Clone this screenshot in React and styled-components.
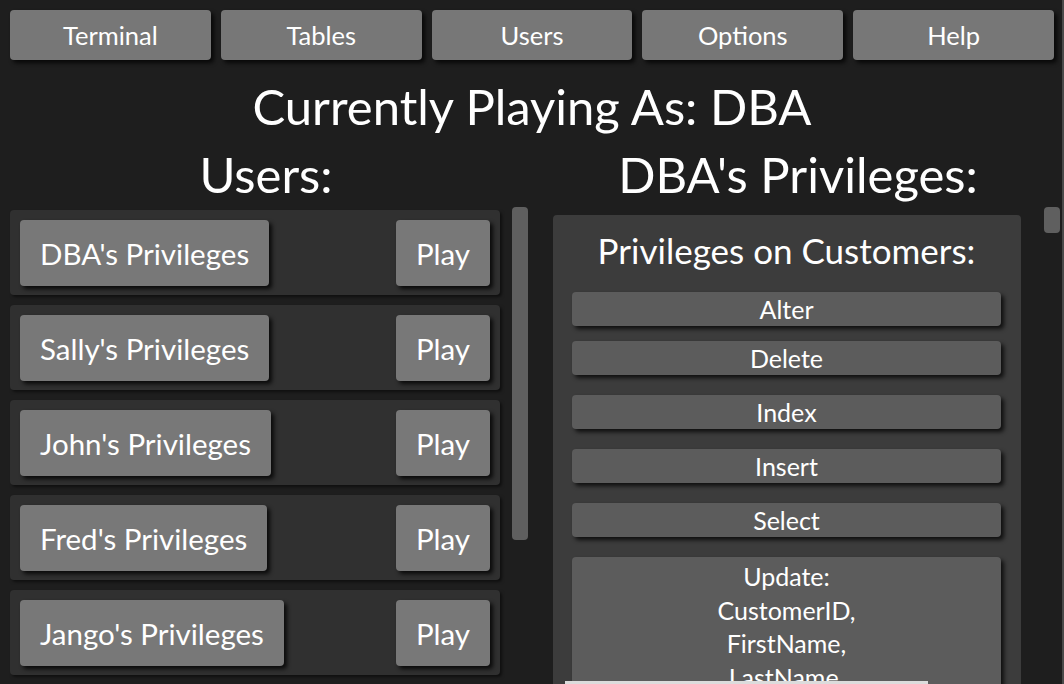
import styled, { createGlobalStyle } from "styled-components";

const GlobalStyle = createGlobalStyle`
  html, body {
    margin: 0;
    padding: 0;
    background: #1e1e1e;
    overflow: hidden;
  }
  body {
    font-family: Lato, "Open Sans", sans-serif;
    color: #ffffff;
  }
  * {
    box-sizing: border-box;
  }
`;

const Page = styled.div`
  position: relative;
  height: 684px;
  overflow: hidden;
  box-shadow: inset -2px 0 0 #4a4a4a;
`;

const Nav = styled.nav`
  display: grid;
  grid-template-columns: repeat(5, 1fr);
  gap: 10px;
  padding: 10px 10px 0;
`;

const NavButton = styled.button`
  height: 50px;
  background: #777777;
  border: none;
  border-radius: 4px;
  color: #ffffff;
  font-family: Lato, "Open Sans", sans-serif;
  font-size: 25.5px;
  box-shadow: 3px 3px 4px rgba(0, 0, 0, 0.75);
  cursor: pointer;
`;

const Title = styled.h1`
  margin: 11px 0 0;
  height: 70px;
  line-height: 70px;
  font-size: 49px;
  font-weight: 400;
  text-align: center;
`;

const Columns = styled.div`
  display: grid;
  grid-template-columns: 532px 532px;
`;

const Column = styled.section`
  display: flex;
  flex-direction: column;
  min-width: 0;
`;

const Heading = styled.h2`
  margin: 0;
  height: 66px;
  line-height: 66px;
  font-size: 49px;
  font-weight: 400;
  text-align: center;
`;

const ScrollRow = styled.div`
  display: flex;
  align-items: flex-start;
  padding-left: ${(p) => p.$inset}px;
  gap: ${(p) => p.$gap}px;
`;

const UserList = styled.ul`
  list-style: none;
  margin: 3px 0 0;
  padding: 0;
  width: 490px;
  display: flex;
  flex-direction: column;
  gap: 10px;
`;

const UserRow = styled.li`
  display: flex;
  justify-content: space-between;
  align-items: center;
  height: 85px;
  padding: 10px 10px 9px;
  background: #303030;
  border-radius: 4px;
  box-shadow: 2px 2px 3px rgba(0, 0, 0, 0.5);
`;

const UserButton = styled.button`
  height: 66px;
  padding: 0 20px;
  background: #787878;
  border: none;
  border-radius: 4px;
  color: #ffffff;
  font-family: Lato, "Open Sans", sans-serif;
  font-size: 29.5px;
  box-shadow: 3px 3px 4px rgba(0, 0, 0, 0.8);
  cursor: pointer;
`;

const Thumb = styled.div`
  width: 16px;
  height: ${(p) => p.$height}px;
  background: #5f5f5f;
  border-radius: 4px;
`;

const Panel = styled.div`
  width: 468px;
  margin-top: 8px;
  padding: 0 20px 20px 19px;
  background: #3c3c3c;
  border-radius: 4px;
  display: flex;
  flex-direction: column;
`;

const PanelTitle = styled.h3`
  margin: 0;
  height: 70px;
  line-height: 70px;
  font-size: 35px;
  font-weight: 400;
  text-align: center;
`;

const PrivButton = styled.button`
  margin-top: ${(p) => p.$space}px;
  min-height: 34px;
  padding: ${(p) => (p.$multi ? "3px 0" : "0")};
  line-height: ${(p) => (p.$multi ? "33.5px" : "34px")};
  background: #5c5c5c;
  border: none;
  border-radius: 4px;
  color: #ffffff;
  font-family: Lato, "Open Sans", sans-serif;
  font-size: 25px;
  white-space: pre-line;
  box-shadow: 3px 3px 4px rgba(0, 0, 0, 0.75);
  cursor: pointer;
`;

const StatusStrip = styled.div`
  position: absolute;
  left: 565px;
  bottom: 0;
  width: 363px;
  height: 3px;
  background: #dcdcdc;
`;

const tabs = ["Terminal", "Tables", "Users", "Options", "Help"];
const users = ["DBA", "Sally", "John", "Fred", "Jango"];
const privileges = [
  { name: "Alter", space: 7 },
  { name: "Delete", space: 15 },
  { name: "Index", space: 20 },
  { name: "Insert", space: 20 },
  { name: "Select", space: 20 },
  {
    name: "Update:\nCustomerID,\nFirstName,\nLastName,\nEmail,\nPhone",
    space: 20,
    multi: true,
  },
];

export default function App() {
  return (
    <Page>
      <GlobalStyle />
      <Nav>
        {tabs.map((t) => (
          <NavButton key={t}>{t}</NavButton>
        ))}
      </Nav>
      <Title>Currently Playing As: DBA</Title>
      <Columns>
        <Column>
          <Heading>Users:</Heading>
          <ScrollRow $inset={10} $gap={12}>
            <UserList>
              {users.map((u) => (
                <UserRow key={u}>
                  <UserButton>{u}'s Privileges</UserButton>
                  <UserButton>Play</UserButton>
                </UserRow>
              ))}
            </UserList>
            <Thumb $height={333} />
          </ScrollRow>
        </Column>
        <Column>
          <Heading>DBA's Privileges:</Heading>
          <ScrollRow $inset={21} $gap={23}>
            <Panel>
              <PanelTitle>Privileges on Customers:</PanelTitle>
              {privileges.map((p) => (
                <PrivButton key={p.name} $space={p.space} $multi={p.multi}>
                  {p.name}
                </PrivButton>
              ))}
            </Panel>
            <Thumb $height={26} />
          </ScrollRow>
        </Column>
      </Columns>
      <StatusStrip />
    </Page>
  );
}
